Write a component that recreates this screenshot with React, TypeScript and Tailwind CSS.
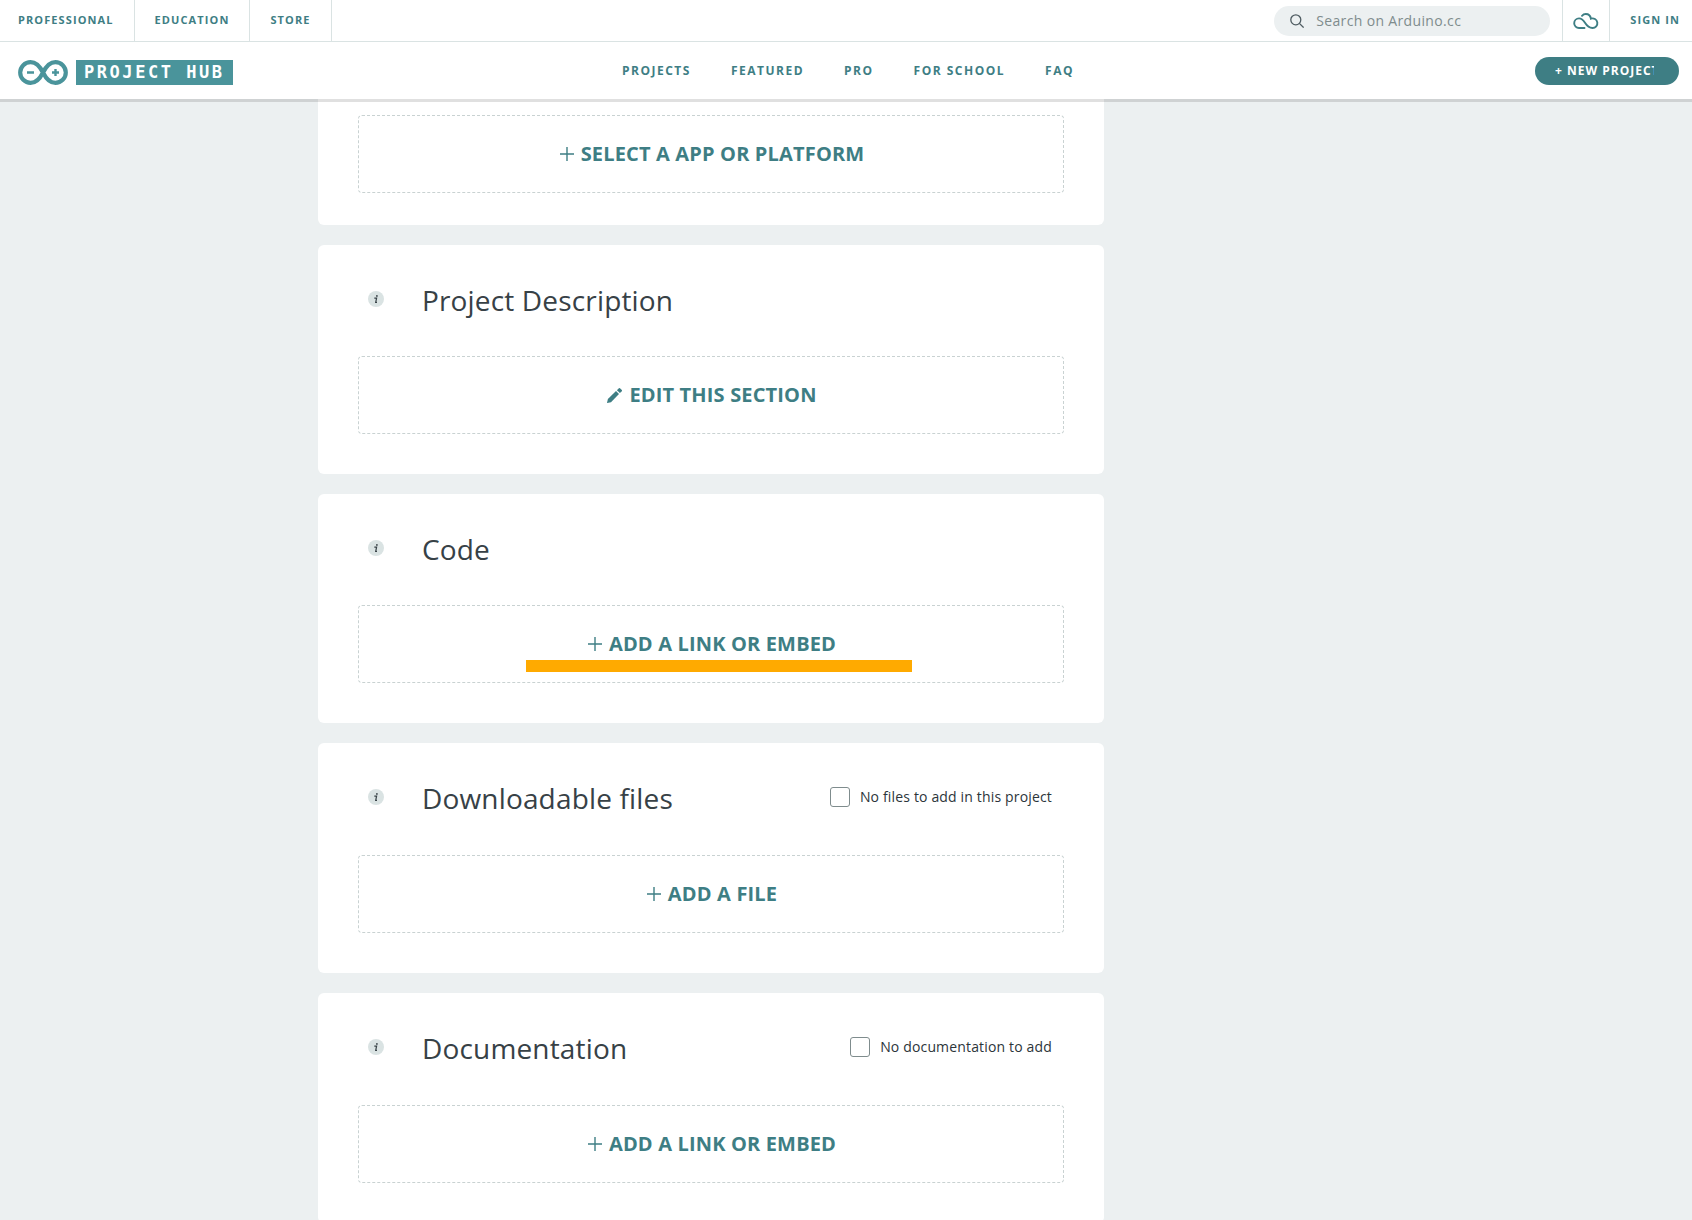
import React, { useId } from 'react';

function PlusIcon() {
  return (
    <svg className="size-[14px]" viewBox="0 0 14 14" fill="none" stroke="#3e7e84" aria-hidden="true">
      <path d="M7 0v14M0 7h14" strokeWidth="1.4" />
    </svg>
  );
}

function PencilIcon() {
  return (
    <svg className="size-[15px]" viewBox="0 0 15 15" fill="#3e7e84" aria-hidden="true">
      <path d="M9 3.1 12 6 4 14.2 0.2 15 0 14.8 0.9 11.1Z" />
      <path d="M9.9 2.2 11.9.3a.8.8 0 0 1 1.1 0l1.8 1.8a.8.8 0 0 1 0 1.1L12.9 5.1Z" />
    </svg>
  );
}

function InfoBadge({ about }: { about: string }) {
  return (
    <button type="button" aria-label={`Help: ${about}`} className="size-4 shrink-0">
      <svg className="size-4" viewBox="0 0 16 16" aria-hidden="true">
        <circle cx="8" cy="8" r="8" fill="#dae3e3" />
        <circle cx="8.9" cy="4.9" r="0.9" fill="#374146" />
        <path d="M6.3 7.2h2.3L7.7 11.4h1.3" fill="none" stroke="#374146" strokeWidth="1.2" />
      </svg>
    </button>
  );
}

function ArduinoLogo() {
  return (
    <svg className="h-[25px] w-[50px]" viewBox="0 0 50 25" fill="none" stroke="#4a949b" aria-hidden="true">
      <path
        d="M25 12.5C21.5 5.5 17.6 2.1 12.6 2.1a10.4 10.4 0 0 0 0 20.8C17.6 22.9 21.5 19.5 25 12.5C28.5 5.5 32.4 2.1 37.4 2.1a10.4 10.4 0 0 1 0 20.8C32.4 22.9 28.5 19.5 25 12.5Z"
        strokeWidth="4.2"
      />
      <path d="M9 12.5h7M34 12.5h7M37.5 9v7" strokeWidth="2.4" />
    </svg>
  );
}

function CloudIcon() {
  return (
    <svg className="h-4 w-[26px]" viewBox="0 0 26 16" fill="none" stroke="#3e7e84" strokeWidth="1.9" strokeLinecap="round" aria-hidden="true">
      <path d="M11.5 15H6a4.8 4.8 0 1 1 0-9.6c3 0 4.500 2 6 4.400C14 13 16 15 19.500 15a4.800 4.800 0 1 0-1.600-9.300C17.500 3 15.500 1 12.800 1c-1.500 0-2.800.6-3.800 1.800" />
    </svg>
  );
}

function SearchIcon() {
  return (
    <svg className="size-[14px] shrink-0" viewBox="0 0 14 14" fill="none" stroke="#4e5b61" strokeWidth="1.3" aria-hidden="true">
      <circle cx="5.8" cy="5.8" r="5" />
      <path d="m9.4 9.4 4.2 4.2" />
    </svg>
  );
}

function Action({ icon, children, marked }: { icon: React.ReactNode; children: string; marked?: boolean }) {
  return (
    <button
      type="button"
      className="relative flex h-[78px] w-full items-center justify-center gap-[7px] rounded border border-dashed border-[#c9d2d2] pl-0.5 text-xl font-bold text-[#3e7e84]"
    >
      {icon}
      <span>{children}</span>
      {marked && <span className="absolute top-[54px] left-[167px] h-3 w-[386px] bg-[#ffaa00]" />}
    </button>
  );
}

function Card({ title, option, children }: { title: string; option?: string; children: React.ReactNode }) {
  const id = useId();
  return (
    <section className="rounded-md bg-white p-10">
      <div className={`flex items-start justify-between pr-3 pl-[10px] ${option ? 'h-[72px]' : 'h-[71px]'}`}>
        <div className="flex items-start gap-[38px]">
          <div className="flex pt-[6px]">
            <InfoBadge about={title} />
          </div>
          <h2 className="text-[28px] leading-[30px] text-[#374146]">{title}</h2>
        </div>
        {option && (
          <div className="flex h-7 items-center gap-[10px]">
            <input id={id} type="checkbox" className="size-5 appearance-none rounded-[3px] border border-[#7f8c8d] bg-white checked:bg-[#3e7e84]" />
            <label htmlFor={id} className="text-sm text-[#2c353a]">
              {option}
            </label>
          </div>
        )}
      </div>
      {children}
    </section>
  );
}

const topLinks = ['PROFESSIONAL', 'EDUCATION', 'STORE'];
const hubLinks = ['PROJECTS', 'FEATURED', 'PRO', 'FOR SCHOOL', 'FAQ'];

export default function App() {
  return (
    <div className="flex h-screen flex-col bg-[#ecf0f1] font-['Open_Sans',sans-serif] tracking-[0.01em]">
      <header className="relative z-10 bg-white shadow-[0_3px_0_rgba(0,0,0,0.12)]">
        <div className="flex h-[42px] justify-between border-b border-[#dae3e3] text-[11px] font-bold tracking-widest text-[#3e7e84]">
          <nav aria-label="Arduino" className="flex">
            {topLinks.map((t) => (
              <a key={t} href="#" className="flex items-center border-r border-[#dae3e3] px-5 first:pl-[18px]">
                {t}
              </a>
            ))}
          </nav>
          <div className="flex">
            <form className="flex items-center pr-3" role="search">
              <label className="flex h-[30px] w-[276px] items-center gap-3 rounded-full bg-[#ecf0f1] pr-4 pl-4">
                <SearchIcon />
                <input
                  type="search"
                  aria-label="Search on Arduino.cc"
                  placeholder="Search on Arduino.cc"
                  className="w-full min-w-0 bg-transparent text-sm font-normal tracking-wide outline-none placeholder:text-[#7f8c8d]"
                />
              </label>
            </form>
            <a href="#" aria-label="Arduino Cloud" className="flex items-center border-x border-[#dae3e3] px-[10px]">
              <CloudIcon />
            </a>
            <a href="#" className="flex items-center pr-3 pl-5">
              SIGN IN
            </a>
          </div>
        </div>
        <div className="grid h-[57px] grid-cols-[1fr_auto_1fr] items-center">
          <a href="#" aria-label="Arduino Project Hub" className="flex items-center gap-2 pt-1 pl-[18px]">
            <ArduinoLogo />
            <span className="flex h-[25px] items-center bg-[#4a949b] px-2 font-['DejaVu_Sans_Mono',monospace] text-[17px] font-bold tracking-[0.15em] whitespace-nowrap text-white">
              PROJECT HUB
            </span>
          </a>
          <nav aria-label="Project Hub" className="flex gap-10 pl-1 text-xs font-bold tracking-[1.5px] text-[#3e7e84]">
            {hubLinks.map((t) => (
              <a key={t} href="#">
                {t}
              </a>
            ))}
          </nav>
          <div className="flex justify-end pr-[13px]">
            <button type="button" className="h-7 w-36 rounded-full bg-[#3e7e84] pr-[25px] pl-5 text-left text-xs font-bold tracking-[1px] text-white">
              <span className="block overflow-hidden whitespace-nowrap">+ NEW PROJECT</span>
            </button>
          </div>
        </div>
      </header>
      <main className="min-h-0 flex-1 overflow-y-auto [scrollbar-width:none]">
        <div className="mx-auto max-w-[1056px]">
          <div className="flex max-w-[786px] flex-col gap-5">
            <section className="rounded-b-md bg-white px-10 pt-4 pb-8">
              <Action icon={<PlusIcon />}>SELECT A APP OR PLATFORM</Action>
            </section>
            <Card title="Project Description">
              <Action icon={<PencilIcon />}>EDIT THIS SECTION</Action>
            </Card>
            <Card title="Code">
              <Action icon={<PlusIcon />} marked>
                ADD A LINK OR EMBED
              </Action>
            </Card>
            <Card title="Downloadable files" option="No files to add in this project">
              <Action icon={<PlusIcon />}>ADD A FILE</Action>
            </Card>
            <Card title="Documentation" option="No documentation to add">
              <Action icon={<PlusIcon />}>ADD A LINK OR EMBED</Action>
            </Card>
          </div>
        </div>
      </main>
    </div>
  );
}
